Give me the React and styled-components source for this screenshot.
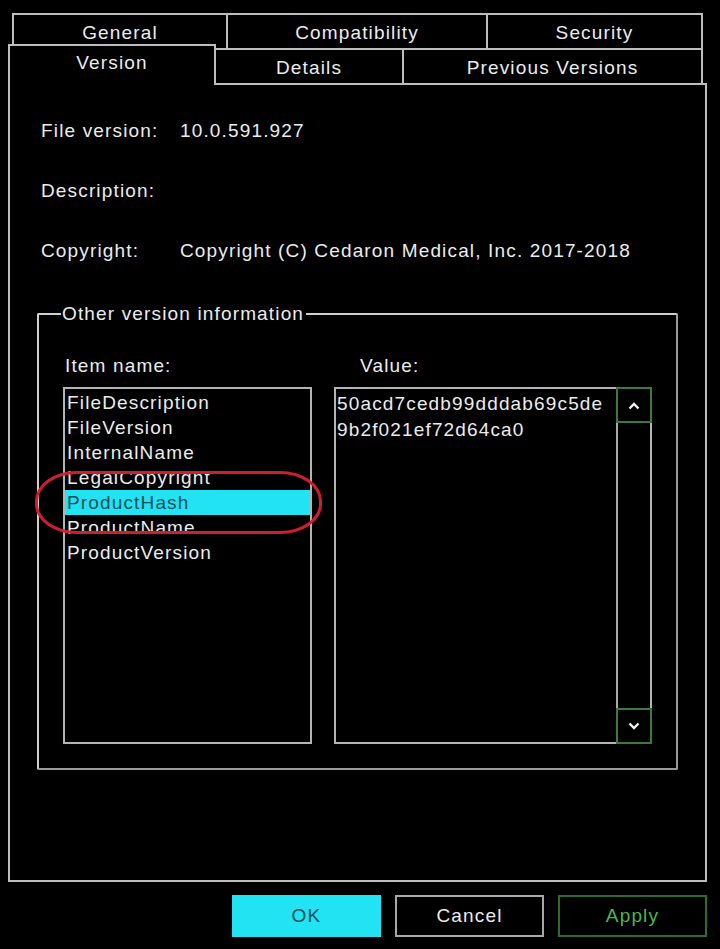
import React from "react";
import styled, { createGlobalStyle } from "styled-components";

const GlobalStyle = createGlobalStyle`
    body {
        margin: 0;
        background: #000;
        font-family: "Liberation Sans", Arial, sans-serif;
        color: #ececec;
    }
`;

const LINE = "#bdbdbd";

const topTabs = [
    { label: "General", width: 216 },
    { label: "Compatibility", width: 260 },
    { label: "Security", width: 215 },
];

const bottomTabs = [
    { label: "Details", width: 188 },
    { label: "Previous Versions", width: 299 },
];

const infoRows = [
    { label: "File version:", value: "10.0.591.927" },
    { label: "Description:", value: "" },
    { label: "Copyright:", value: "Copyright (C) Cedaron Medical, Inc. 2017-2018" },
];

const items = [
    "FileDescription",
    "FileVersion",
    "InternalName",
    "LegalCopyright",
    "ProductHash",
    "ProductName",
    "ProductVersion",
];

const Chevron = ({ up }) => (
    <svg width="14" height="9" viewBox="0 0 14 9">
        <polyline
            points={up ? "2.5,7.5 7,3 11.5,7.5" : "2.5,1.5 7,6 11.5,1.5"}
            fill="none"
            stroke="#f2f2f2"
            strokeWidth="2.4"
        />
    </svg>
);

const App = () => {
    return (
        <>
            <GlobalStyle />
            <StyledDialog>
                <StyledTopRow>
                    {topTabs.map((t, i) => (
                        <StyledTopTab key={t.label} $width={t.width} $first={i === 0}>
                            {t.label}
                        </StyledTopTab>
                    ))}
                </StyledTopRow>
                <StyledBottomRow>
                    <StyledActiveTab>Version</StyledActiveTab>
                    {bottomTabs.map((t) => (
                        <StyledBottomTab key={t.label} $width={t.width}>
                            {t.label}
                        </StyledBottomTab>
                    ))}
                </StyledBottomRow>
                <StyledPanel>
                    {infoRows.map((r) => (
                        <StyledInfoRow key={r.label}>
                            <StyledInfoLabel>{r.label}</StyledInfoLabel>
                            <span>{r.value}</span>
                        </StyledInfoRow>
                    ))}
                    <StyledGroup>
                        <StyledLegend>Other version information</StyledLegend>
                        <StyledColumns>
                            <div>
                                <StyledColLabel>Item name:</StyledColLabel>
                                <StyledListBox>
                                    {items.map((it) => (
                                        <StyledItem key={it} $selected={it === "ProductHash"}>
                                            {it}
                                        </StyledItem>
                                    ))}
                                    <StyledMark />
                                </StyledListBox>
                            </div>
                            <div>
                                <StyledColLabel $indent>Value:</StyledColLabel>
                                <StyledValueBox>
                                    <StyledValueText>
                                        50acd7cedb99dddab69c5de
                                        <br />
                                        9b2f021ef72d64ca0
                                    </StyledValueText>
                                    <StyledScrollbar>
                                        <StyledScrollButton>
                                            <Chevron up />
                                        </StyledScrollButton>
                                        <StyledScrollButton>
                                            <Chevron />
                                        </StyledScrollButton>
                                    </StyledScrollbar>
                                </StyledValueBox>
                            </div>
                        </StyledColumns>
                    </StyledGroup>
                </StyledPanel>
                <StyledButtons>
                    <StyledButton $kind="ok">OK</StyledButton>
                    <StyledButton>Cancel</StyledButton>
                    <StyledButton $kind="apply">Apply</StyledButton>
                </StyledButtons>
            </StyledDialog>
        </>
    );
};

const StyledDialog = styled.div`
    width: 720px;
    height: 949px;
    box-sizing: border-box;
    padding: 13px 0 0 8px;
    font-size: 19px;
    letter-spacing: 1.15px;
`;

const StyledTopRow = styled.div`
    display: flex;
    margin-left: 4px;
    height: 35px;
`;

const StyledTopTab = styled.div`
    box-sizing: border-box;
    width: ${(p) => p.$width}px;
    border-top: 2px solid ${LINE};
    border-right: 2px solid ${LINE};
    border-left: ${(p) => (p.$first ? `2px solid ${LINE}` : "none")};
    display: flex;
    justify-content: center;
    align-items: center;
    padding-top: 2px;
`;

const StyledBottomRow = styled.div`
    display: flex;
    align-items: flex-end;
    margin-top: -4px;
    height: 39px;
`;

const StyledActiveTab = styled.div`
    position: relative;
    z-index: 2;
    box-sizing: border-box;
    width: 208px;
    height: 41px;
    margin-bottom: -2px;
    background: #000;
    border: 2px solid ${LINE};
    border-bottom: none;
    display: flex;
    justify-content: center;
    padding-top: 6px;
`;

const StyledBottomTab = styled.div`
    box-sizing: border-box;
    width: ${(p) => p.$width}px;
    height: 35px;
    border-top: 2px solid ${LINE};
    border-right: 2px solid ${LINE};
    display: flex;
    justify-content: center;
    align-items: center;
    padding-top: 2px;
`;

const StyledPanel = styled.div`
    box-sizing: border-box;
    width: 699px;
    height: 799px;
    border: 2px solid ${LINE};
    padding: 16px 0 0 31px;
`;

const StyledInfoRow = styled.div`
    display: flex;
    align-items: center;
    height: 60px;
`;

const StyledInfoLabel = styled.span`
    width: 139px;
`;

const StyledGroup = styled.fieldset`
    box-sizing: border-box;
    width: 641px;
    height: 467px;
    margin: 22px 0 0 -4px;
    padding: 30px 0 0 24px;
    border: 2px solid #cfcfcf;
    border-right-color: #9a9a9a;
    border-bottom-color: #9a9a9a;
    border-radius: 2px;
`;

const StyledLegend = styled.legend`
    padding: 0 2px 0 1px;
    margin-left: -2px;
    line-height: 22px;
`;

const StyledColumns = styled.div`
    display: grid;
    grid-template-columns: 249px 318px;
    column-gap: 22px;
`;

const StyledColLabel = styled.div`
    height: 22px;
    line-height: 22px;
    margin-bottom: 10px;
    padding-left: ${(p) => (p.$indent ? 26 : 2)}px;
`;

const StyledListBox = styled.div`
    position: relative;
    box-sizing: border-box;
    height: 357px;
    border: 2px solid #b4b4b4;
    padding: 1px 0 0 0;
`;

const StyledItem = styled.div`
    height: 25px;
    line-height: 25px;
    padding-left: 2px;
    background: ${(p) => (p.$selected ? "#22e3f2" : "transparent")};
    color: ${(p) => (p.$selected ? "#0d4d5c" : "#ececec")};
`;

const StyledMark = styled.div`
    position: absolute;
    left: -30px;
    top: 82px;
    width: 287px;
    height: 63px;
    box-sizing: border-box;
    border: 3px solid #cf1f2c;
    border-radius: 42px / 30px;
    pointer-events: none;
`;

const StyledValueBox = styled.div`
    box-sizing: border-box;
    display: flex;
    height: 357px;
    border: 2px solid #b4b4b4;
`;

const StyledValueText = styled.div`
    flex: 1;
    padding: 2px 0 0 1px;
    line-height: 26px;
`;

const StyledScrollbar = styled.div`
    width: 34px;
    border-left: 2px solid #a8a8a8;
    display: flex;
    flex-direction: column;
    justify-content: space-between;
    margin-right: -2px;
`;

const StyledScrollButton = styled.div`
    box-sizing: border-box;
    height: 36px;
    margin-left: -2px;
    border: 2px solid #3e7a3e;
    display: flex;
    align-items: center;
    justify-content: center;
    &:first-child {
        margin-top: -2px;
    }
    &:last-child {
        margin-bottom: -2px;
    }
`;

const StyledButtons = styled.div`
    display: flex;
    justify-content: flex-end;
    gap: 14px;
    width: 699px;
    margin-top: 13px;
`;

const StyledButton = styled.div`
    box-sizing: border-box;
    width: 149px;
    height: 42px;
    display: flex;
    align-items: center;
    justify-content: center;
    background: ${(p) => (p.$kind === "ok" ? "#22e3f2" : "#000")};
    color: ${(p) =>
        p.$kind === "ok" ? "#0d4d5c" : p.$kind === "apply" ? "#4cb84c" : "#ececec"};
    border: 2px solid
        ${(p) => (p.$kind === "ok" ? "#22e3f2" : p.$kind === "apply" ? "#2f6a2f" : "#a8a8a8")};
`;

export default App;
